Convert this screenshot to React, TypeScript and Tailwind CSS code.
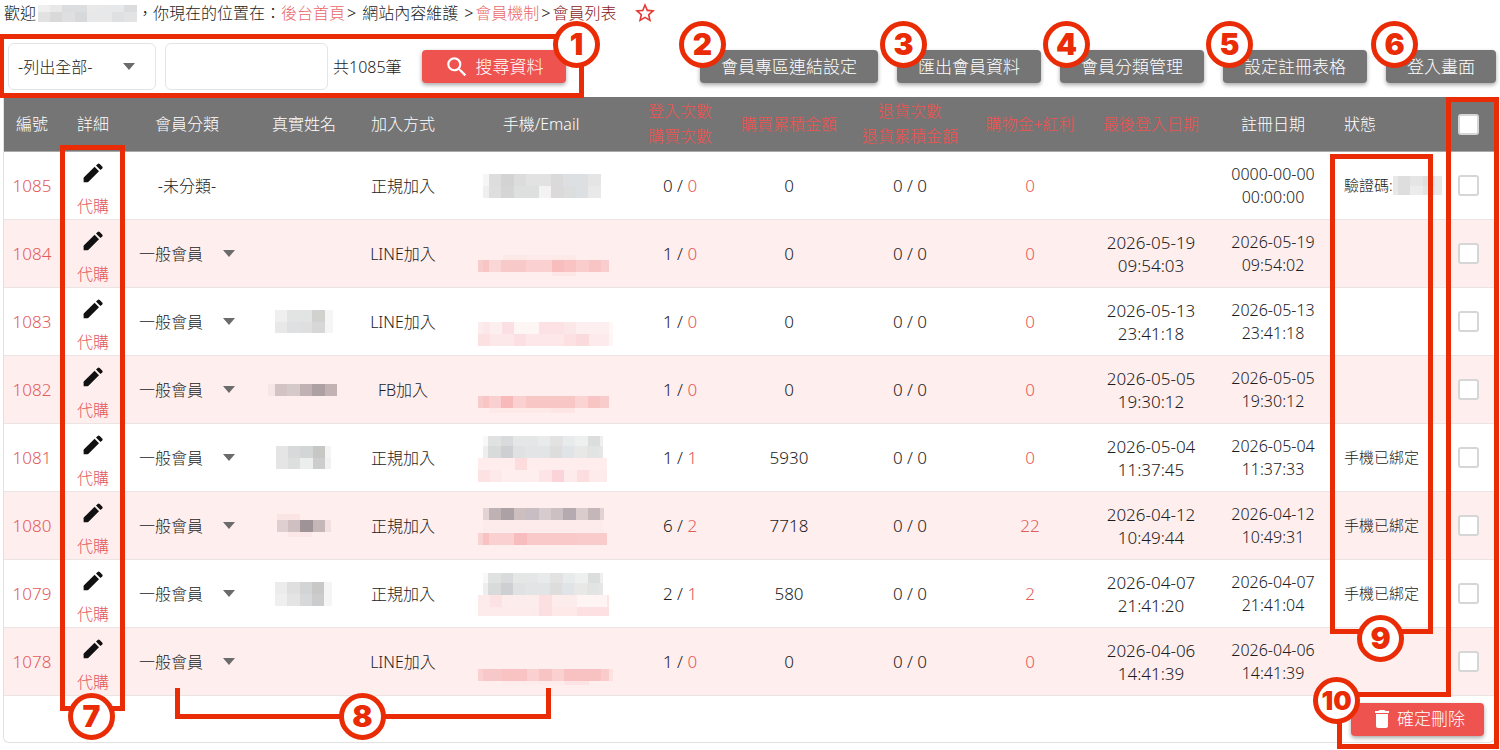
import { Fragment, type ReactNode } from "react";
import { MdDelete, MdSearch, MdStarBorder } from "react-icons/md";

type Strip = { x: number; y: number; h: number; cells: [number, string][] };

type Member = {
  id: number;
  group: string | null;
  name?: Strip[];
  join: string;
  contact: Strip[];
  logins: number;
  orders: number;
  spent: number;
  points: number;
  lastLogin?: [string, string];
  registered: [string, string];
  status?: ReactNode;
};

function Mosaic({ width, height, strips, label }: { width: number; height: number; strips: Strip[]; label: string }) {
  return (
    <svg width={width} height={height} role="img" aria-label={label} shapeRendering="crispEdges" className="mx-auto block shrink-0">
      {strips.map((s, i) => {
        let x = s.x;
        return (
          <Fragment key={i}>
            {s.cells.map(([w, fill], j) => {
              const rect = <rect key={j} x={x} y={s.y} width={w} height={s.h} fill={fill} />;
              x += w;
              return rect;
            })}
          </Fragment>
        );
      })}
    </svg>
  );
}

const greyTop: [number, string][] = [[5, "#f8f8f8"], [13, "#e0e1e1"], [12, "#d9dadc"], [25, "#e5e6e6"], [12, "#e8eaeb"], [13, "#e2e2e2"], [12, "#e8ebec"], [13, "#eeefef"], [12, "#dcdddd"], [3, "#efefef"]];
const greyBottom: [number, string][] = [[5, "#eeeeee"], [13, "#d9dada"], [12, "#cdcfd2"], [12, "#dfe1e2"], [25, "#e3e4e5"], [12, "#dddddb"], [12, "#e0e3e7"], [13, "#e8e8e7"], [12, "#e2e3e3"], [4, "#e6e6e6"]];

const members: Member[] = [
  {
    id: 1085, group: null, join: "正規加入", logins: 0, orders: 0, spent: 0, points: 0,
    contact: [
      { x: 14, y: 22, h: 12, cells: [[6, "#f6f6f6"], [12, "#dddddd"], [13, "#d3d3d4"], [12, "#dcdcdc"], [25, "#e2e2e3"], [12, "#dbdadb"], [25, "#dde0e2"], [13, "#e5e5e5"]] },
      { x: 14, y: 34, h: 12, cells: [[6, "#efefef"], [12, "#dedede"], [13, "#d5d5d6"], [25, "#dedfdf"], [12, "#f3f3f3"], [13, "#dbd9d9"], [12, "#dcdddd"], [12, "#dde0e3"], [13, "#e9e9e9"]] },
    ],
    registered: ["0000-00-00", "00:00:00"],
    status: (
      <span className="flex items-center">
        驗證碼:
        <Mosaic width={49} height={19} label="已遮蔽" strips={[
          { x: 0, y: 0, h: 19, cells: [[5, "#e8e8e8"], [12, "#dedede"], [13, "#e5e5e5"], [12, "#dfdfdf"], [7, "#e9e9e9"]] },
          { x: 17, y: 10, h: 9, cells: [[13, "#ececec"], [12, "#e4e4e4"]] },
        ]} />
      </span>
    ),
  },
  {
    id: 1084, group: "一般會員", join: "LINE加入", logins: 1, orders: 0, spent: 0, points: 0,
    contact: [
      { x: 34, y: 35, h: 5, cells: [[24, "#fde8e8"], [25, "#feeaea"], [24, "#fee9e9"]] },
      { x: 9, y: 40, h: 12, cells: [[5, "#f9cccc"], [6, "#f8c4c4"], [12, "#fbd6d6"], [25, "#f8c9c9"], [26, "#fad0d0"], [12, "#f8bebe"], [12, "#f9c3c3"], [13, "#facccc"], [12, "#f8c4c4"], [8, "#f9cdcd"]] },
      { x: 83, y: 52, h: 4, cells: [[24, "#fee6e6"]] },
    ],
    lastLogin: ["2026-05-19", "09:54:03"], registered: ["2026-05-19", "09:54:02"],
  },
  {
    id: 1083, group: "一般會員", join: "LINE加入", logins: 1, orders: 0, spent: 0, points: 0,
    name: [
      { x: 7, y: 22, h: 12, cells: [[12, "#efefef"], [25, "#e2e3e3"], [13, "#d1d2d0"], [8, "#f5f5f5"]] },
      { x: 7, y: 34, h: 11, cells: [[12, "#e8e8e8"], [13, "#dfe0e2"], [12, "#e0dfdf"], [13, "#d7d7d7"], [8, "#f5f5f5"]] },
    ],
    contact: [
      { x: 9, y: 34, h: 12, cells: [[5, "#fdecee"], [7, "#fce7e9"], [12, "#fdeff0"], [12, "#fbe0e3"], [25, "#fef5f5"], [25, "#fce2e5"], [12, "#fbe7e8"], [33, "#fdeff0"], [6, "#fef9f9"]] },
      { x: 9, y: 46, h: 12, cells: [[12, "#fce1e3"], [24, "#fde8e9"], [12, "#fcdfe2"], [38, "#fde7e9"], [12, "#fce0e2"], [13, "#fadadd"], [20, "#fdeaec"], [6, "#fef5f5"]] },
    ],
    lastLogin: ["2026-05-13", "23:41:18"], registered: ["2026-05-13", "23:41:18"],
  },
  {
    id: 1082, group: "一般會員", join: "FB加入", logins: 1, orders: 0, spent: 0, points: 0,
    name: [{ x: 0, y: 28, h: 12, cells: [[7, "#f8e6e6"], [12, "#d4c3c4"], [13, "#d5c9ca"], [12, "#c2b1b4"], [13, "#aea1a4"], [12, "#c2b2b4"]] }],
    contact: [
      { x: 9, y: 40, h: 12, cells: [[5, "#f9cccc"], [6, "#f8c4c4"], [12, "#facfcf"], [12, "#f7b9ba"], [13, "#fad0d0"], [49, "#f9c6c6"], [13, "#fbd3d3"], [12, "#f8c4c4"], [9, "#f9cccc"]] },
      { x: 20, y: 52, h: 5, cells: [[62, "#fee9e9"], [24, "#fee5e5"]] },
    ],
    lastLogin: ["2026-05-05", "19:30:12"], registered: ["2026-05-05", "19:30:12"],
  },
  {
    id: 1081, group: "一般會員", join: "正規加入", logins: 1, orders: 1, spent: 5930, points: 0,
    name: [
      { x: 8, y: 22, h: 12, cells: [[12, "#e5e5e5"], [12, "#d8d9da"], [13, "#d3d6d7"], [12, "#c7c8c6"], [6, "#f4f4f4"]] },
      { x: 8, y: 34, h: 11, cells: [[12, "#e5e5e5"], [12, "#dddede"], [13, "#eceeee"], [12, "#cdcdcd"], [6, "#f1f1f1"]] },
    ],
    contact: [
      { x: 14, y: 12, h: 10, cells: greyTop },
      { x: 14, y: 22, h: 12, cells: greyBottom },
      { x: 9, y: 34, h: 12, cells: [[37, "#ffecec"], [12, "#fddcdd"], [80, "#ffeded"]] },
      { x: 9, y: 46, h: 12, cells: [[12, "#fde2e4"], [12, "#fde9e9"], [37, "#feeeee"], [13, "#fde5e7"], [12, "#fad4d8"], [13, "#fdeaeb"], [12, "#fcdde0"], [18, "#fdeaea"]] },
    ],
    lastLogin: ["2026-05-04", "11:37:45"], registered: ["2026-05-04", "11:37:33"], status: "手機已綁定",
  },
  {
    id: 1080, group: "一般會員", join: "正規加入", logins: 6, orders: 2, spent: 7718, points: 22,
    name: [
      { x: 9, y: 22, h: 6, cells: [[23, "#fbe4e4"]] },
      { x: 9, y: 28, h: 12, cells: [[11, "#dfcfd0"], [12, "#cfbfc0"], [13, "#9f9398"], [12, "#c5b6b8"], [6, "#f3dfdf"]] },
      { x: 20, y: 40, h: 5, cells: [[24, "#fbe7e7"]] },
    ],
    contact: [
      { x: 14, y: 16, h: 12, cells: [[6, "#e3d3d4"], [12, "#bfb2b4"], [13, "#aca1a5"], [12, "#cdbfc0"], [13, "#c7bdc3"], [12, "#d8cbcd"], [12, "#cdc0c3"], [13, "#b5aab0"], [12, "#dacccd"], [12, "#c5b7b9"], [4, "#e2d2d3"]] },
      { x: 14, y: 28, h: 12, cells: [[120, "#fdeaea"]] },
      { x: 9, y: 41, h: 12, cells: [[5, "#fad2d2"], [6, "#f8c1c2"], [25, "#fad0d0"], [13, "#f7bcbd"], [50, "#f9c8c8"], [30, "#f9cbcb"]] },
    ],
    lastLogin: ["2026-04-12", "10:49:44"], registered: ["2026-04-12", "10:49:31"], status: "手機已綁定",
  },
  {
    id: 1079, group: "一般會員", join: "正規加入", logins: 2, orders: 1, spent: 580, points: 2,
    name: [
      { x: 7, y: 22, h: 12, cells: [[12, "#ececec"], [13, "#dfdfdf"], [12, "#d2d4d5"], [12, "#c8c9c7"], [8, "#f5f5f5"]] },
      { x: 7, y: 34, h: 12, cells: [[12, "#efefef"], [13, "#e4e4e4"], [12, "#d6d8d9"], [12, "#cbcccb"], [8, "#f5f5f5"]] },
    ],
    contact: [
      { x: 14, y: 13, h: 10, cells: greyTop },
      { x: 14, y: 23, h: 12, cells: greyBottom },
      { x: 9, y: 35, h: 12, cells: [[12, "#fdebeb"], [12, "#fde2e3"], [37, "#fdecec"], [13, "#fcdfe0"], [25, "#fdecec"], [30, "#fff4f4"], [2, "#fde5e5"]] },
      { x: 9, y: 47, h: 9, cells: [[12, "#fdebeb"], [49, "#fdebec"], [13, "#fcdfe0"], [25, "#fee8e8"], [32, "#fde1e2"]] },
    ],
    lastLogin: ["2026-04-07", "21:41:20"], registered: ["2026-04-07", "21:41:04"], status: "手機已綁定",
  },
  {
    id: 1078, group: "一般會員", join: "LINE加入", logins: 1, orders: 0, spent: 0, points: 0,
    contact: [
      { x: 9, y: 41, h: 12, cells: [[5, "#fad0d0"], [19, "#f8c8c8"], [25, "#f9c3c4"], [12, "#fbd0d0"], [13, "#f8c3c3"], [12, "#fad0d0"], [37, "#f8c2c2"], [8, "#f9cbcb"], [5, "#fde2e2"]] },
      { x: 34, y: 53, h: 4, cells: [[62, "#feebeb"], [24, "#fde3e3"]] },
    ],
    lastLogin: ["2026-04-06", "14:41:39"], registered: ["2026-04-06", "14:41:39"],
  },
];

function Caret() {
  return (
    <svg width="12" height="7" viewBox="0 0 12 7" aria-hidden="true">
      <path d="M0 0h12L6 7z" fill="#6b6b6b" />
    </svg>
  );
}

function Pencil() {
  return (
    <svg width="20" height="20" viewBox="0 0 20 20" fill="currentColor" aria-hidden="true" className="block">
      <path d="M.6 15.2Q.6 14.6 1 14.2L11.6 3.8l4.4 4.4L5.5 18.8q-.4.4-1 .4H.6z" />
      <path d="M13 2.6 14.7.9q1-.9 2 0l2.5 2.5q.9 1 0 2L17.4 7z" />
    </svg>
  );
}

function GreyButton({ children }: { children: ReactNode }) {
  return (
    <button type="button" className="h-[33px] rounded bg-[#757575] px-[21px] text-[17px] whitespace-nowrap text-white shadow-[0_2px_4px_rgba(0,0,0,0.35)]">
      {children}
    </button>
  );
}

function SortHead({ lines }: { lines: string[] }) {
  return (
    <th scope="col" className="border-b border-[#a8a8a8] font-light text-[#ef5350]">
      {lines.map((line) => (
        <a key={line} href="#sort" className="block whitespace-nowrap">{line}</a>
      ))}
    </th>
  );
}

function Head({ children, left }: { children: ReactNode; left?: boolean }) {
  return (
    <th scope="col" className={left ? "border-b border-[#a8a8a8] pl-[6px] text-left font-light" : "border-b border-[#a8a8a8] font-light"}>
      {children}
    </th>
  );
}

const cell = "border-b border-[#ebe3e4] p-0";
const checkbox = "block mx-auto size-[21px] appearance-none rounded-[3px] border-2 border-[#d6d6d6] bg-white";

function Row({ m, tinted }: { m: Member; tinted: boolean }) {
  return (
    <tr className={tinted ? "h-[68px] bg-[#ffeeee]" : "h-[68px] bg-white"}>
      <td className={`${cell} text-[17px] text-[#e35a5a]`}>{m.id}</td>
      <td className={`${cell} align-top`}>
        <div className="flex flex-col items-center gap-3 pt-[11px]">
          <a href="#edit" aria-label={`編輯 ${m.id}`} className="text-[#111]"><Pencil /></a>
          <a href="#order" className="leading-[22px] text-[#e35a5a]">代購</a>
        </div>
      </td>
      <td className={cell}>
        {m.group ? (
          <div className="relative ml-[13px] flex w-[97px] items-center">
            <select aria-label={`會員分類 ${m.id}`} className="w-full appearance-none bg-transparent">
              <option>{m.group}</option>
            </select>
            <span className="pointer-events-none absolute right-[1px]"><Caret /></span>
          </div>
        ) : "-未分類-"}
      </td>
      <td className={cell}>{m.name && <Mosaic width={72} height={67} strips={m.name} label="姓名已遮蔽" />}</td>
      <td className={cell}>{m.join}</td>
      <td className={cell}><Mosaic width={144} height={67} strips={m.contact} label="聯絡資料已遮蔽" /></td>
      <td className={`${cell} text-[17px]`}>{m.logins} / <span className="text-[#e35a5a]">{m.orders}</span></td>
      <td className={`${cell} text-[17px]`}>{m.spent}</td>
      <td className={`${cell} text-[17px]`}>0 / 0</td>
      <td className={`${cell} text-[17px] text-[#e35a5a]`}>{m.points}</td>
      <td className={`${cell} text-[17px] leading-[23px]`}>
        {m.lastLogin && <>{m.lastLogin[0]}<br />{m.lastLogin[1]}</>}
      </td>
      <td className={`${cell} leading-[23px]`}>{m.registered[0]}<br />{m.registered[1]}</td>
      <td className={`${cell} pl-[6px] text-left text-[15px] whitespace-nowrap`}>{m.status}</td>
      <td className={cell}><input type="checkbox" aria-label={`選取 ${m.id}`} className={checkbox} /></td>
    </tr>
  );
}

function Badge({ n, place }: { n: number; place: string }) {
  return (
    <span className={`absolute flex size-[47px] items-center justify-center rounded-full border-5 border-[#e92b06] bg-white font-['Inter',sans-serif] font-black text-[#e92b06] ${n > 9 ? "text-[26px]" : "text-[30px]"} ${place}`}>
      {n}
    </span>
  );
}

function Callouts() {
  return (
    <div className="pointer-events-none absolute inset-0">
      <div className="absolute top-[34px] left-[-1px] h-[64px] w-[585px] border-5 border-[#e92b06]" />
      <div className="absolute top-[145px] left-[60px] h-[566px] w-[65px] border-5 border-[#e92b06]" />
      <div className="absolute top-[688px] left-[175px] h-[31px] w-[376px] border-5 border-t-0 border-[#e92b06]" />
      <div className="absolute top-[154px] left-[1330px] h-[480px] w-[103px] border-5 border-[#e92b06]" />
      <svg width="170" height="658" viewBox="1330 92 170 658" shapeRendering="crispEdges" aria-hidden="true" className="absolute top-[92px] left-[1330px]">
        <path d="M1350 694.5H1448.5V99.5H1496.5V746.5H1339.5V715" fill="none" stroke="#e92b06" strokeWidth="5" />
      </svg>
      <Badge n={1} place="top-[21px] left-[553px]" />
      <Badge n={2} place="top-[21px] left-[679px]" />
      <Badge n={3} place="top-[21px] left-[880px]" />
      <Badge n={4} place="top-[21px] left-[1043px]" />
      <Badge n={5} place="top-[21px] left-[1206px]" />
      <Badge n={6} place="top-[21px] left-[1371px]" />
      <Badge n={7} place="top-[693px] left-[68px]" />
      <Badge n={8} place="top-[693px] left-[339px]" />
      <Badge n={9} place="top-[615px] left-[1357px]" />
      <Badge n={10} place="top-[677px] left-[1313px]" />
    </div>
  );
}

export default function App() {
  return (
    <div className="relative overflow-hidden bg-white pb-[7px] font-['Noto_Sans','Noto_Sans_CJK_TC',sans-serif] text-base font-light text-[#1c1c1c]">
      <nav aria-label="目前位置" className="flex h-[26px] items-center pl-1 whitespace-nowrap">
        <span>歡迎</span>
        <span className="ml-[2px]">
          <Mosaic width={99} height={17} label="帳號已遮蔽" strips={[
            { x: 0, y: 0, h: 7, cells: [[12, "#efefef"], [12, "#e8e8e8"], [25, "#dcdddf"], [13, "#e9e9e9"], [24, "#e7e8ea"], [13, "#dadcde"]] },
            { x: 0, y: 7, h: 10, cells: [[12, "#e2e2e3"], [12, "#d9d9da"], [13, "#dfdfe1"], [12, "#d7d8da"], [25, "#e8e8e8"], [12, "#dfe0e2"], [13, "#e3e3e4"]] },
          ]} />
        </span>
        <span>，你現在的位置在：</span>
        <a href="#home" className="text-[#e9686a]">後台首頁</a>
        <span className="mx-[2px]">&gt;</span>
        <span className="mx-1">網站內容維護</span>
        <span className="mx-[2px]">&gt;</span>
        <a href="#members" className="text-[#e9686a]">會員機制</a>
        <span className="mx-[2px]">&gt;</span>
        <span className="text-[#8b1a1a]">會員列表</span>
        <button type="button" aria-label="加入最愛" className="ml-4 text-[#e53935]"><MdStarBorder size={24} className="block" /></button>
      </nav>

      <div className="flex items-center justify-between pt-[17px] pr-1 pb-[7px] pl-2">
        <form className="flex items-center">
          <div className="relative flex h-[47px] w-[148px] items-center rounded-md border border-[#e4e4e4]">
            <select aria-label="會員分類篩選" className="h-full w-full appearance-none bg-transparent pl-[9px]">
              <option>-列出全部-</option>
            </select>
            <span className="pointer-events-none absolute right-[20px]"><Caret /></span>
          </div>
          <input type="text" aria-label="關鍵字" className="ml-[9px] h-[47px] w-[163px] rounded-md border border-[#e4e4e4] px-2" />
          <span className="ml-[5px] whitespace-nowrap">共1085筆</span>
          <button type="button" className="ml-5 flex h-[33px] items-center gap-[6px] rounded bg-[#ef5350] px-[22px] text-[17px] whitespace-nowrap text-white shadow-[0_2px_4px_rgba(0,0,0,0.35)]">
            <MdSearch size={26} />
            搜尋資料
          </button>
        </form>
        <div className="flex gap-[19px]">
          <GreyButton>會員專區連結設定</GreyButton>
          <GreyButton>匯出會員資料</GreyButton>
          <GreyButton>會員分類管理</GreyButton>
          <GreyButton>設定註冊表格</GreyButton>
          <GreyButton>登入畫面</GreyButton>
        </div>
      </div>

      <section className="mr-[5px] ml-[3px] rounded-b-md border border-t-0 border-[#e2e2e2]">
        <table className="w-full table-fixed border-separate border-spacing-0 text-center">
          <colgroup>
            <col className="w-[56px]" />
            <col className="w-[66px]" />
            <col className="w-[122px]" />
            <col className="w-[112px]" />
            <col className="w-[86px]" />
            <col className="w-[190px]" />
            <col className="w-[88px]" />
            <col className="w-[130px]" />
            <col className="w-[112px]" />
            <col className="w-[128px]" />
            <col className="w-[114px]" />
            <col className="w-[130px]" />
            <col className="w-[104px]" />
            <col className="w-[52px]" />
          </colgroup>
          <thead>
            <tr className="h-[55px] bg-[#757575] leading-[25px] text-white">
              <Head>編號</Head>
              <Head>詳細</Head>
              <Head>會員分類</Head>
              <Head>真實姓名</Head>
              <Head>加入方式</Head>
              <Head>手機/Email</Head>
              <SortHead lines={["登入次數", "購買次數"]} />
              <SortHead lines={["購買累積金額"]} />
              <SortHead lines={["退貨次數", "退貨累積金額"]} />
              <SortHead lines={["購物金+紅利"]} />
              <SortHead lines={["最後登入日期"]} />
              <Head>註冊日期</Head>
              <Head left>狀態</Head>
              <Head><input type="checkbox" aria-label="全選" className={checkbox} /></Head>
            </tr>
          </thead>
          <tbody>
            {members.map((m, i) => (
              <Row key={m.id} m={m} tinted={i % 2 === 1} />
            ))}
          </tbody>
        </table>
        <div className="flex h-[46px] items-center justify-end pr-[10px]">
          <button type="button" className="flex h-[33px] items-center gap-[3px] rounded bg-[#ef5350] px-[19px] text-[17px] whitespace-nowrap text-white shadow-[0_2px_4px_rgba(0,0,0,0.35)]">
            <MdDelete size={24} />
            確定刪除
          </button>
        </div>
      </section>

      <Callouts />
    </div>
  );
}
